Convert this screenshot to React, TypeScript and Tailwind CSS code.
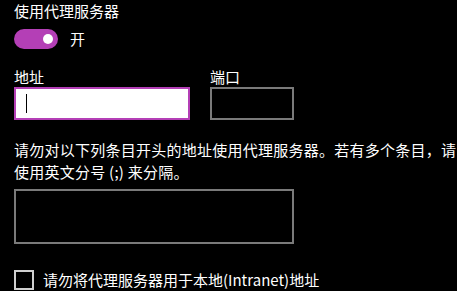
import { useState } from 'react';

const font = { fontFamily: '"Noto Sans CJK SC", "Noto Sans", sans-serif' };

export default function App() {
    const [on, setOn] = useState(true);
    const [bypassLocal, setBypassLocal] = useState(false);

    return (
        <div className="w-[457px] h-[291px] bg-black text-white overflow-hidden px-[14px] pt-[1px]" style={font}>
            {/* Title */}
            <div className="text-[15px] leading-[20px]">使用代理服务器</div>

            {/* Toggle */}
            <div className="mt-[8px] flex items-center gap-[12px]">
                <button
                    onClick={() => setOn(!on)}
                    className={`w-[44px] h-[20px] rounded-full flex items-center px-[5px] ${on ? 'bg-[#b43fb6] justify-end' : 'border-2 border-white justify-start'}`}
                >
                    <span className="w-[10px] h-[10px] rounded-full bg-white"></span>
                </button>
                <span className="text-[15px] leading-[20px]">{on ? '开' : '关'}</span>
            </div>

            {/* Address / port */}
            <div className="mt-[18px] flex gap-[20px]">
                <div className="flex flex-col">
                    <div className="text-[15px] leading-[20px]">地址</div>
                    <div className="w-[176px] h-[33px] border-2 border-[#b43fb6] bg-white flex items-center pl-[10px]">
                        <span className="w-[1px] h-[19px] bg-black"></span>
                    </div>
                </div>
                <div className="flex flex-col">
                    <div className="text-[15px] leading-[20px]">端口</div>
                    <div className="w-[84px] h-[33px] border-2 border-[#7a7a7a]"></div>
                </div>
            </div>

            {/* Exceptions */}
            <p className="mt-[19px] w-[452px] text-[15px] leading-[22px] tracking-[0.25px]">
                请勿对以下列条目开头的地址使用代理服务器。若有多个条目，请使用英文分号 (;) 来分隔。
            </p>
            <div className="mt-[6px] w-[280px] h-[55px] border-2 border-[#7a7a7a]"></div>

            {/* Checkbox */}
            <label className="mt-[26px] flex items-center gap-[9px] cursor-pointer">
                <span
                    onClick={() => setBypassLocal(!bypassLocal)}
                    className={`w-[20px] h-[20px] border-2 ${bypassLocal ? 'bg-[#b43fb6] border-[#b43fb6]' : 'border-[#d0d0d0]'}`}
                ></span>
                <span className="text-[15px] leading-[20px]">请勿将代理服务器用于本地(Intranet)地址</span>
            </label>
        </div>
    );
}
